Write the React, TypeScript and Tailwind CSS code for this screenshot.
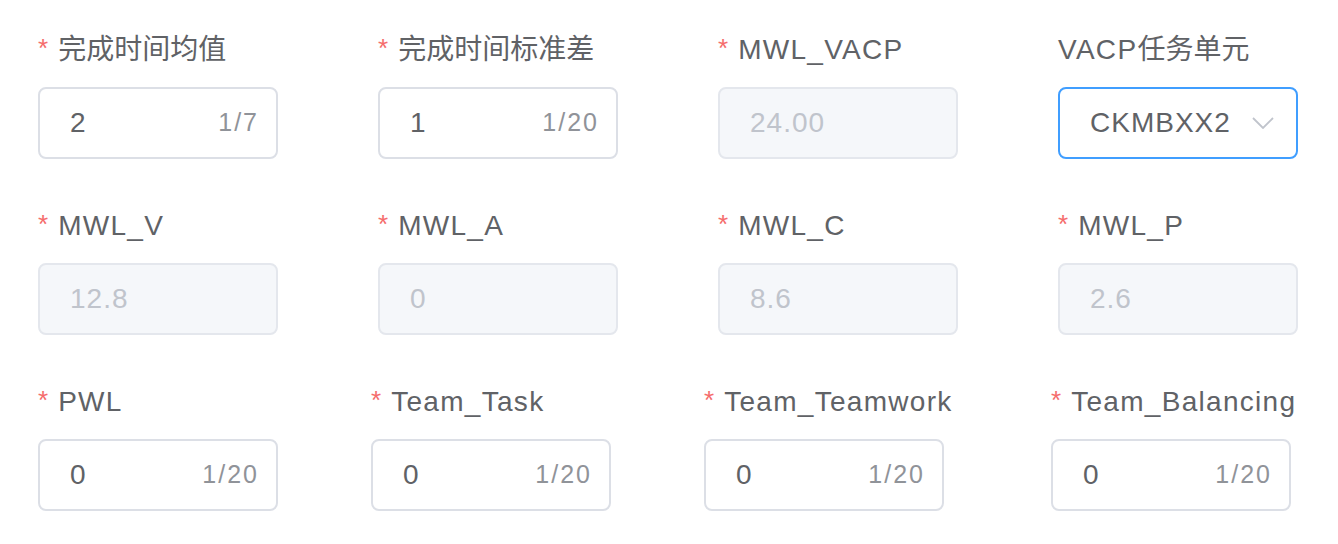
import React from "react";

type Field = {
  label: string;
  required?: boolean;
  value: string;
  kind: "count" | "disabled" | "select";
  max?: string;
};

const font = {
  fontFamily: '"Liberation Sans", "Noto Sans CJK SC", sans-serif',
};

function Mixed({ text }: { text: string }) {
  const parts = text.match(/[\x00-\x7f]+|[^\x00-\x7f]+/g) ?? [];
  return (
    <>
      {parts.map((p, i) =>
        /^[\x00-\x7f]+$/.test(p) ? (
          <span key={i} className="tracking-[1.3px]">
            {p}
          </span>
        ) : (
          <span key={i}>{p}</span>
        )
      )}
    </>
  );
}

function Label({ f }: { f: Field }) {
  return (
    <div className="h-[80px] pt-[6px] flex items-center text-[28px] text-[#606266] whitespace-nowrap">
      {f.required && <span className="text-[#f56c6c] text-[26px] mr-[10px] relative top-[-2px]">*</span>}
      <Mixed text={f.label} />
    </div>
  );
}

function Box({ f }: { f: Field }) {
  if (f.kind === "disabled") {
    return (
      <div className="w-[240px] h-[72px] rounded-[8px] border-2 border-[#e4e7ed] bg-[#f5f7fa] flex items-center pl-[30px] text-[28px] tracking-[1px] text-[#c0c4cc]">
        {f.value}
      </div>
    );
  }
  if (f.kind === "select") {
    return (
      <div className="w-[240px] h-[72px] rounded-[8px] border-2 border-[#409eff] bg-white flex items-center pl-[30px] pr-[22px] text-[28px] tracking-[1px] text-[#606266]">
        <span className="flex-1">{f.value}</span>
        <svg width="22" height="12" viewBox="0 0 22 12" fill="none">
          <path d="M1 1 L11 11 L21 1" stroke="#c0c4cc" strokeWidth="1.8" />
        </svg>
      </div>
    );
  }
  return (
    <div className="w-[240px] h-[72px] rounded-[8px] border-2 border-[#dcdfe6] bg-white flex items-center pl-[30px] pr-[17px] text-[28px] tracking-[1px] text-[#606266]">
      <span className="flex-1">{f.value}</span>
      <span className="text-[25px] tracking-[2px] text-[#909399]">{f.max}</span>
    </div>
  );
}

function Item({ f, className }: { f: Field; className?: string }) {
  return (
    <div className={"w-[240px] flex flex-col " + (className ?? "")}>
      <Label f={f} />
      <Box f={f} />
    </div>
  );
}

const row1: Field[] = [
  { label: "完成时间均值", required: true, value: "2", kind: "count", max: "1/7" },
  { label: "完成时间标准差", required: true, value: "1", kind: "count", max: "1/20" },
  { label: "MWL_VACP", required: true, value: "24.00", kind: "disabled" },
  { label: "VACP任务单元", value: "CKMBXX2", kind: "select" },
];
const row2: Field[] = [
  { label: "MWL_V", required: true, value: "12.8", kind: "disabled" },
  { label: "MWL_A", required: true, value: "0", kind: "disabled" },
  { label: "MWL_C", required: true, value: "8.6", kind: "disabled" },
  { label: "MWL_P", required: true, value: "2.6", kind: "disabled" },
];
const row3: Field[] = [
  { label: "PWL", required: true, value: "0", kind: "count", max: "1/20" },
  { label: "Team_Task", required: true, value: "0", kind: "count", max: "1/20" },
  { label: "Team_Teamwork", required: true, value: "0", kind: "count", max: "1/20" },
  { label: "Team_Balancing", required: true, value: "0", kind: "count", max: "1/20" },
];

export default function App() {
  return (
    <div className="w-[1338px] h-[544px] bg-white pt-[7px] pl-[38px] overflow-hidden" style={font}>
      <div className="flex gap-[100px] mb-[24px]">
        {row1.map((f) => (
          <Item key={f.label} f={f} />
        ))}
      </div>
      <div className="flex gap-[100px] mb-[24px]">
        {row2.map((f) => (
          <Item key={f.label} f={f} />
        ))}
      </div>
      <div className="flex">
        <Item f={row3[0]} />
        <Item f={row3[1]} className="ml-[93px]" />
        <Item f={row3[2]} className="ml-[93px]" />
        <Item f={row3[3]} className="ml-[107px]" />
      </div>
    </div>
  );
}
